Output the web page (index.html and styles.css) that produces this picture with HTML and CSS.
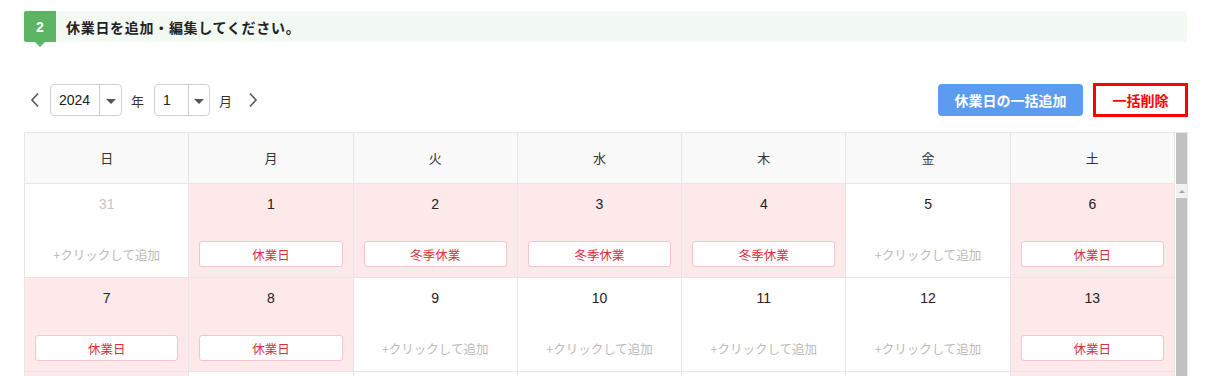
FILE: index.html
```html
<!DOCTYPE html>
<html lang="ja">
<head>
<meta charset="utf-8">
<link rel="stylesheet" href="styles.css">
</head>
<body>
<div class="page">
  <div class="step">
    <div class="badge">2</div>
    <div class="step-title">休業日を追加・編集してください。</div>
  </div>

  <div class="toolbar">
    <div class="nav">
      <span class="chev">
        <svg width="12" height="16" viewBox="0 0 12 16"><path d="M9 1.5 L3 8 L9 14.5" fill="none" stroke="#555" stroke-width="1.6"/></svg>
      </span>
      <div class="select year">
        <span class="sel-val">2024</span>
        <span class="sel-arrow"><i></i></span>
      </div>
      <span class="unit">年</span>
      <div class="select month">
        <span class="sel-val">1</span>
        <span class="sel-arrow"><i></i></span>
      </div>
      <span class="unit">月</span>
      <span class="chev">
        <svg width="12" height="16" viewBox="0 0 12 16"><path d="M3 1.5 L9 8 L3 14.5" fill="none" stroke="#555" stroke-width="1.6"/></svg>
      </span>
    </div>
    <div class="actions">
      <button class="btn-add">休業日の一括追加</button>
      <button class="btn-del">一括削除</button>
    </div>
  </div>

  <div class="calendar">
    <div class="cal-main">
      <div class="cal-head">
        <div class="hcell">日</div>
        <div class="hcell">月</div>
        <div class="hcell">火</div>
        <div class="hcell">水</div>
        <div class="hcell">木</div>
        <div class="hcell">金</div>
        <div class="hcell">土</div>
      </div>
      <div class="cal-body">
        <div class="cell"><div class="num other">31</div><div class="add">+クリックして追加</div></div>
        <div class="cell off"><div class="num">1</div><div class="tag">休業日</div></div>
        <div class="cell off"><div class="num">2</div><div class="tag">冬季休業</div></div>
        <div class="cell off"><div class="num">3</div><div class="tag">冬季休業</div></div>
        <div class="cell off"><div class="num">4</div><div class="tag">冬季休業</div></div>
        <div class="cell"><div class="num">5</div><div class="add">+クリックして追加</div></div>
        <div class="cell off"><div class="num">6</div><div class="tag">休業日</div></div>

        <div class="cell off"><div class="num">7</div><div class="tag">休業日</div></div>
        <div class="cell off"><div class="num">8</div><div class="tag">休業日</div></div>
        <div class="cell"><div class="num">9</div><div class="add">+クリックして追加</div></div>
        <div class="cell"><div class="num">10</div><div class="add">+クリックして追加</div></div>
        <div class="cell"><div class="num">11</div><div class="add">+クリックして追加</div></div>
        <div class="cell"><div class="num">12</div><div class="add">+クリックして追加</div></div>
        <div class="cell off"><div class="num">13</div><div class="tag">休業日</div></div>

        <div class="cell short off"></div>
        <div class="cell short"></div>
        <div class="cell short"></div>
        <div class="cell short"></div>
        <div class="cell short"></div>
        <div class="cell short"></div>
        <div class="cell short off"></div>
      </div>
    </div>
    <div class="scrollbar">
      <div class="sb-head"></div>
      <div class="sb-up"><i></i></div>
      <div class="sb-thumb"></div>
    </div>
  </div>
</div>
</body>
</html>
```

FILE: styles.css
```css
* { box-sizing: border-box; }

html, body {
  margin: 0;
  background: #fff;
  overflow: hidden;
}

body {
  font-family: "Noto Sans CJK JP", "Noto Sans", "Liberation Sans", sans-serif;
  color: #333;
  font-size: 13px;
}

.page {
  width: 1210px;
  padding: 11px 22px 0 24px;
}

/* Step header */
.step {
  display: flex;
  align-items: stretch;
  height: 31px;
  width: 1163px;
  background: #f2faf3;
  border-radius: 0 4px 4px 0;
}

.badge {
  position: relative;
  width: 32px;
  background: #5bb564;
  color: #fff;
  font-family: "Liberation Sans", sans-serif;
  font-weight: bold;
  font-size: 14px;
  display: flex;
  align-items: center;
  justify-content: center;
  border-radius: 2px 0 0 2px;
}

.badge::after {
  content: "";
  position: absolute;
  left: 11px;
  bottom: -5px;
  border-left: 5px solid transparent;
  border-right: 5px solid transparent;
  border-top: 5px solid #5bb564;
}

.step-title {
  display: flex;
  align-items: center;
  padding-left: 10px;
  font-weight: bold;
  font-size: 14px;
  letter-spacing: 0.7px;
  color: #222;
}

/* Toolbar */
.toolbar {
  display: flex;
  justify-content: space-between;
  align-items: center;
  margin-top: 41px;
  height: 34px;
}

.nav {
  display: flex;
  align-items: center;
  padding-left: 4px;
}

.chev {
  display: flex;
  width: 14px;
  justify-content: center;
}

.nav .chev:first-child { margin-right: 8px; }
.nav .chev:last-child { margin-left: 4px; }

.select {
  display: flex;
  height: 32px;
  border: 1px solid #cfcfcf;
  border-radius: 4px;
  background: #fff;
}

.select.year { width: 72px; }
.select.month { width: 56px; }

.sel-val {
  display: flex;
  align-items: center;
  padding-left: 8px;
  font-family: "Liberation Sans", sans-serif;
  font-size: 14px;
  color: #222;
  border-right: 1px solid #cfcfcf;
}

.year .sel-val { width: 49px; }
.month .sel-val { width: 34px; }

.sel-arrow {
  flex: 1;
  display: flex;
  align-items: center;
  justify-content: center;
}

.sel-arrow i {
  display: block;
  border-left: 5px solid transparent;
  border-right: 5px solid transparent;
  border-top: 5px solid #555;
  margin-top: 2px;
}

.unit {
  font-size: 13px;
  color: #333;
  margin: 0 10px 0 9px;
}

.actions {
  display: flex;
  align-items: center;
  gap: 10px;
}

.btn-add {
  height: 32px;
  width: 145px;
  border: none;
  border-radius: 4px;
  background: #5b9cf1;
  color: #fff;
  font-family: inherit;
  font-weight: bold;
  font-size: 14px;
  padding: 0;
}

.btn-del {
  height: 34px;
  width: 95px;
  border: 3px solid #ff0000;
  background: #fff;
  color: #ff0000;
  font-family: inherit;
  font-weight: bold;
  font-size: 14px;
  padding: 0;
}

/* Calendar */
.calendar {
  display: flex;
  margin-top: 15px;
  width: 1164px;
  border-top: 1px solid #e6e6e6;
}

.cal-main {
  width: 1151px;
  border-left: 1px solid #e6e6e6;
}

.cal-head,
.cal-body {
  display: grid;
  grid-template-columns: repeat(7, 1fr);
}

.hcell {
  height: 51px;
  padding-bottom: 2px;
  background: #f9f9f9;
  border-right: 1px solid #e6e6e6;
  border-bottom: 1px solid #e6e6e6;
  display: flex;
  align-items: center;
  justify-content: center;
  font-size: 13px;
  color: #333;
}

.cell {
  height: 94px;
  border-right: 1px solid #e6e6e6;
  border-bottom: 1px solid #e6e6e6;
  display: flex;
  flex-direction: column;
  align-items: stretch;
  padding: 10px 10px 0 10px;
  background: #fff;
}

.cell.short { height: 20px; }

.cell.off { background: #fde8ea; }

.num {
  text-align: center;
  font-family: "Liberation Sans", sans-serif;
  font-size: 14px;
  color: #222;
  height: 20px;
  line-height: 20px;
}

.num.other { color: #c4c4c4; }

.tag {
  margin-top: 27px;
  height: 26px;
  border: 1px solid #f8c3cb;
  border-radius: 3px;
  background: #fff;
  color: #d83040;
  font-size: 12.5px;
  display: flex;
  align-items: center;
  justify-content: center;
}

.add {
  margin-top: 27px;
  height: 26px;
  color: #bbb;
  font-size: 12.5px;
  display: flex;
  align-items: center;
  justify-content: center;
}

/* Scrollbar */
.scrollbar {
  width: 13px;
  display: flex;
  flex-direction: column;
  border-right: 1px solid #ececec;
  padding-left: 1px;
}

.sb-head {
  height: 51px;
  background: #c1c1c1;
}

.sb-up {
  height: 14px;
  background: #f1f1f1;
  display: flex;
  align-items: center;
  justify-content: center;
}

.sb-up i {
  display: block;
  border-left: 3px solid transparent;
  border-right: 3px solid transparent;
  border-bottom: 3px solid #a3a3a3;
}

.sb-thumb {
  flex: 1;
  background: #c1c1c1;
}
```
